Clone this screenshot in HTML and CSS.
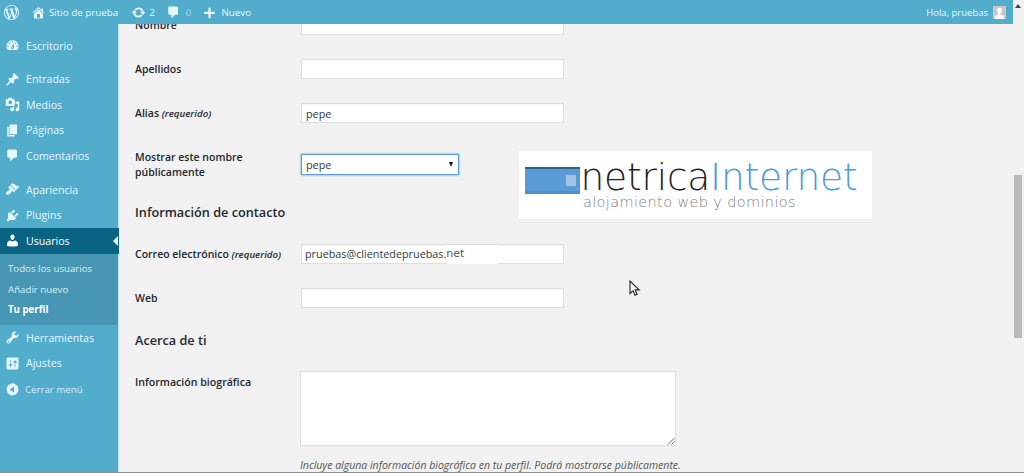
FILE: index.html
```html
<!DOCTYPE html>
<html lang="es">
<head>
<meta charset="utf-8">
<title>Tu perfil</title>
<link rel="stylesheet" href="styles.css">
</head>
<body>
<div class="window">
  <div class="app">
    <header class="bar">
      <svg class="bar-icon logo-w" viewBox="0 0 20 20"><path d="M20 10c0-5.51-4.49-10-10-10C4.48 0 0 4.49 0 10c0 5.52 4.48 10 10 10 5.51 0 10-4.48 10-10zM7.78 15.37L4.37 6.22c.55-.02 1.17-.08 1.17-.08.5-.06.44-1.13-.06-1.11 0 0-1.45.11-2.37.11-.18 0-.37 0-.58-.01C4.12 2.69 6.87 1.11 10 1.11c2.33 0 4.45.87 6.05 2.34-.68-.11-1.65.39-1.65 1.58 0 .74.45 1.36.9 2.1.35.61.55 1.36.55 2.46 0 1.49-1.4 5-1.4 5l-3.03-8.37c.54-.02.82-.17.82-.17.5-.05.44-1.25-.06-1.22 0 0-1.44.12-2.38.12-.87 0-2.33-.12-2.33-.12-.5-.03-.56 1.2-.06 1.22l.92.08 1.26 3.41zM17.41 10c.24-.64.74-1.87.43-4.25.7 1.29 1.05 2.71 1.05 4.25 0 3.29-1.73 6.24-4.4 7.78.97-2.59 1.94-5.2 2.92-7.78zM6.1 18.09C3.12 16.65 1.11 13.53 1.11 10c0-1.3.23-2.48.72-3.59C3.25 10.3 4.67 14.2 6.1 18.09zm4.03-6.63l2.58 6.98c-.86.29-1.76.45-2.71.45-.79 0-1.57-.11-2.29-.33.81-2.38 1.62-4.74 2.42-7.1z"/></svg>
      <span class="bar-item site">
        <svg class="bar-icon" viewBox="0 0 20 20"><path d="M16 8.5l1.53 1.53-1.06 1.06L10 4.62l-6.47 6.47-1.06-1.06L10 2.5l4 4v-2h2v4zm-6-2.46l6 5.99V18H4v-5.97zM12 17v-5H8v5h4z"/></svg>
        Sitio de prueba
      </span>
      <span class="bar-item updates">
        <svg class="bar-icon" viewBox="0 0 20 20"><path d="M10.2 3.28c3.53 0 6.43 2.61 6.92 6h2.08l-3.5 4-3.5-4h2.32c-.45-1.97-2.21-3.45-4.32-3.45-1.45 0-2.73.71-3.54 1.78L4.95 5.66C6.23 4.2 8.11 3.28 10.2 3.28zm-.4 13.44c-3.52 0-6.43-2.61-6.92-6H.8l3.5-4c1.17 1.33 2.33 2.67 3.5 4H5.48c.45 1.97 2.21 3.45 4.32 3.45 1.45 0 2.73-.71 3.54-1.78l1.71 1.95c-1.28 1.46-3.15 2.38-5.25 2.38z"/></svg>
        2
      </span>
      <span class="bar-item comments">
        <svg class="bar-icon" viewBox="0 0 20 20"><path d="M5 2h9c1.1 0 2 .9 2 2v7c0 1.1-.9 2-2 2h-2l-5 5v-5H5c-1.1 0-2-.9-2-2V4c0-1.1.9-2 2-2z"/></svg>
        <span class="count-zero">0</span>
      </span>
      <span class="bar-item new">
        <svg class="bar-icon" viewBox="0 0 20 20"><path d="M17 9v3h-5.5v5.500h-3V12H3V9h5.500V3.500h3V9z"/></svg>
        Nuevo
      </span>
      <span class="bar-item account">
        Hola, pruebas
        <span class="avatar"><svg viewBox="0 0 14 14"><rect width="14" height="14" fill="#c9c9c9"/><path fill="#fff" d="M7 2c1.700 0 2.600 1.300 2.400 3-.1 1.400-.8 2.700-1.300 3.200v1l3.400 1.500V14h-9v-3.300l3.400-1.500v-1C5.400 7.700 4.700 6.400 4.600 5 4.400 3.300 5.300 2 7 2z"/></svg></span>
      </span>
    </header>
    <div class="body">
      <nav class="menu">
        <a class="item group-end"><svg viewBox="0 0 20 20"><path d="M3.76 16h12.48c1.100-1.370 1.760-3.110 1.760-5 0-4.420-3.580-8-8-8s-8 3.580-8 8c0 1.890.66 3.630 1.760 5zM10 4c.55 0 1 .45 1 1s-.45 1-1 1-1-.45-1-1 .45-1 1-1zM6 6c.55 0 1 .45 1 1s-.45 1-1 1-1-.45-1-1 .45-1 1-1zm8 0c.55 0 1 .45 1 1s-.45 1-1 1-1-.45-1-1 .45-1 1-1zm-5.370 5.550L12 7v6c0 1.100-.9 2-2 2s-2-.9-2-2c0-.57.24-1.080.63-1.450zM4 10c.55 0 1 .45 1 1s-.45 1-1 1-1-.45-1-1 .45-1 1-1zm12 0c.55 0 1 .45 1 1s-.45 1-1 1-1-.45-1-1 .45-1 1-1zm-5 3c0-.55-.45-1-1-1s-1 .45-1 1 .45 1 1 1 1-.45 1-1z"/></svg>Escritorio</a>
        <a class="item"><svg viewBox="0 0 20 20"><path d="M10.440 3.020l1.820-1.820 6.360 6.350-1.830 1.820c-1.050-.68-2.480-.57-3.410.36l-.75.75c-.92.93-1.040 2.350-.35 3.410l-1.830 1.820-2.410-2.410-2.800 2.790c-.42.42-3.380 2.710-3.800 2.290s1.860-3.390 2.280-3.810l2.790-2.790L4.100 9.360l1.830-1.820c1.050.69 2.480.57 3.400-.36l.75-.75c.93-.92 1.050-2.350.36-3.410z"/></svg>Entradas</a>
        <a class="item"><svg viewBox="0 0 20 20"><path d="M13 11V4c0-.55-.45-1-1-1h-1.670L9 1H5L3.670 3H2c-.55 0-1 .45-1 1v7c0 .55.45 1 1 1h10c.55 0 1-.45 1-1zM7 4.500c1.380 0 2.500 1.120 2.500 2.500S8.380 9.500 7 9.500 4.500 8.380 4.500 7 5.620 4.500 7 4.500zM14 6h5v10.500c0 1.380-1.120 2.500-2.500 2.500S14 17.880 14 16.500s1.120-2.500 2.500-2.500c.17 0 .34.02.5.05V9h-3V6zm-4 8.050V13h2v3.500c0 1.380-1.120 2.500-2.500 2.500S7 17.880 7 16.500 8.120 14 9.500 14c.17 0 .34.02.5.05z"/></svg>Medios</a>
        <a class="item"><svg viewBox="0 0 20 20"><path d="M6 15V2h10v13H6zm-1 1h8v2H3V5h2v11z"/></svg>Páginas</a>
        <a class="item group-end"><svg viewBox="0 0 20 20"><path d="M5 2h9c1.100 0 2 .9 2 2v7c0 1.100-.9 2-2 2h-2l-5 5v-5H5c-1.100 0-2-.9-2-2V4c0-1.100.9-2 2-2z"/></svg>Comentarios</a>
        <a class="item"><svg viewBox="0 0 20 20"><path d="M14.480 11.060L7.410 3.990l1.500-1.500c.5-.56 2.300-.47 3.510.32 1.210.8 1.430 1.280 2.910 2.100 1.180.64 2.450 1.260 4.450.85zm-.71.71L6.700 4.700 4.930 6.470c-.39.39-.39 1.020 0 1.410l1.060 1.060c.39.39.39 1.030 0 1.420-.6.6-1.430 1.110-2.210 1.690-.35.26-.7.53-1.010.84C1.430 13.230.78 15.780 1.700 16.700c.92.92 3.470.28 4.810-1.060.31-.31.58-.66.85-1.010.58-.78 1.090-1.610 1.690-2.210.39-.39 1.020-.39 1.410 0l1.060 1.060c.39.39 1.020.39 1.410 0z"/></svg>Apariencia</a>
        <a class="item"><svg viewBox="0 0 20 20"><path d="M13.110 4.360L9.870 7.600 8 5.730l3.240-3.240c.35-.34 1.050-.2 1.560.32.52.51.66 1.210.31 1.550zm-8 1.770l.91-1.120 9.010 9.010-1.190.84c-.71.71-2.630 1.160-3.820 1.160H6.140L4.900 17.260c-.59.59-1.540.59-2.120 0-.59-.58-.59-1.530 0-2.120l1.240-1.240v-3.880c0-1.130.4-3.190 1.090-3.890zm7.260 3.970l3.240-3.240c.34-.35 1.040-.21 1.550.31.52.51.66 1.210.31 1.550l-3.240 3.250z"/></svg>Plugins</a>
        <a class="item current"><svg viewBox="0 0 20 20"><path d="M10 9.250c-2.270 0-2.730-3.440-2.730-3.440C7 4.020 7.820 2 9.970 2c2.160 0 2.980 2.020 2.710 3.810 0 0-.41 3.440-2.680 3.440zm0 2.570L12.720 10c2.390 0 4.520 2.330 4.520 4.530v2.490s-3.650 1.130-7.240 1.130c-3.650 0-7.240-1.130-7.240-1.130v-2.490c0-2.250 1.940-4.480 4.470-4.480z"/></svg>Usuarios</a>
        <div class="submenu">
          <a>Todos los usuarios</a>
          <a>Añadir nuevo</a>
          <a class="sub-current">Tu perfil</a>
        </div>
        <a class="item"><svg viewBox="0 0 20 20"><path d="M16.680 9.770c-1.340 1.340-3.300 1.670-4.950.99l-5.410 6.520c-.99.99-2.590.99-3.580 0s-.99-2.590 0-3.570l6.520-5.420c-.68-1.650-.35-3.610.99-4.950 1.280-1.280 3.120-1.620 4.720-1.060l-2.890 2.890 2.820 2.820 2.860-2.870c.53 1.580.18 3.390-1.080 4.650zM3.810 16.210c.4.39 1.040.39 1.430 0 .4-.4.4-1.040 0-1.430-.39-.4-1.030-.4-1.430 0-.39.39-.39 1.030 0 1.430z"/></svg>Herramientas</a>
        <a class="item"><svg viewBox="0 0 20 20"><path d="M18 16V4c0-1.100-.9-2-2-2H4c-1.100 0-2 .9-2 2v12c0 1.100.9 2 2 2h12c1.100 0 2-.9 2-2zM8 11h1c.55 0 1 .45 1 1s-.45 1-1 1H8v1.500c0 .28-.22.5-.5.5s-.5-.22-.5-.5V13H6c-.55 0-1-.45-1-1s.45-1 1-1h1V5.500c0-.28.22-.5.5-.5s.5.22.5.5V11zm5-2h-1c-.55 0-1-.45-1-1s.45-1 1-1h1V5.500c0-.28.22-.5.5-.5s.5.22.5.5V7h1c.55 0 1 .45 1 1s-.45 1-1 1h-1v5.500c0 .28-.22.5-.5.5s-.5-.22-.5-.5V9z"/></svg>Ajustes</a>
        <a class="item collapse"><svg viewBox="0 0 20 20"><path d="M10 2.160c4.330 0 7.840 3.510 7.840 7.840s-3.510 7.840-7.840 7.840S2.160 14.330 2.160 10 5.710 2.160 10 2.160zm2 11.720V6.120L6.180 9.970z"/></svg>Cerrar menú</a>
      </nav>
      <main class="main">
        <form class="form">
          <div class="row">
            <label class="label">Nombre</label>
            <input class="field" type="text">
          </div>
          <div class="row">
            <label class="label">Apellidos</label>
            <input class="field" type="text">
          </div>
          <div class="row">
            <label class="label">Alias <em>(requerido)</em></label>
            <input class="field" type="text" value="pepe">
          </div>
          <div class="row row-tall">
            <label class="label label-top">Mostrar este nombre públicamente</label>
            <span class="select">pepe<i class="select-arrow"></i></span>
          </div>
          <h2 class="heading heading-contact">Información de contacto</h2>
          <div class="row">
            <label class="label">Correo electrónico <em>(requerido)</em></label>
            <div class="field email">pruebas@clientedepruebas.<span class="email-end">net</span></div>
          </div>
          <div class="row">
            <label class="label">Web</label>
            <input class="field" type="text">
          </div>
          <h2 class="heading heading-about">Acerca de ti</h2>
          <div class="row row-bio">
            <label class="label">Información biográfica</label>
            <div class="bio-col">
              <div class="bio">
                <svg class="grip" viewBox="0 0 8 8"><path d="M7.500 1L1 7.500M7.500 4.500L4.500 7.500" stroke="#666" fill="none"/></svg>
              </div>
              <p class="hint">Incluye alguna información biográfica en tu perfil. Podrá mostrarse públicamente.</p>
            </div>
          </div>
        </form>
        <div class="brand">
          <div class="brand-mark"><span></span></div>
          <div class="brand-text">
            <div class="brand-name">netrica<span>Internet</span></div>
            <div class="brand-tag">alojamiento web y dominios</div>
          </div>
        </div>
        <svg class="cursor" viewBox="0 0 12 17"><path d="M1 1v12.500l3-2.700 2 4.400 2.200-1-2-4.300h4z" fill="#f4f4f4" stroke="#222" stroke-width="1.100"/></svg>
      </main>
    </div>
  </div>
  <aside class="scrollbar">
    <i class="scroll-up"></i>
    <div class="thumb"></div>
  </aside>
</div>
</body>
</html>
```
FILE: styles.css
```css
* { box-sizing: border-box; }
html, body { margin: 0; height: 100%; overflow: hidden; }
body { background: #f1f1f1; font-family: "Open Sans", sans-serif; color: #444; font-size: 11px; }
.window { display: flex; height: 473px; border-bottom: 1px solid #909090; }
.app { flex: 1; min-width: 0; display: flex; flex-direction: column; }
.bar { height: 24px; flex: none; background: #52accc; color: #e5f8ff; display: flex; align-items: center; padding-left: 4px; font-size: 9.800px; }
.bar-icon { width: 15px; height: 15px; fill: #e5f8ff; flex: none; }
.bar-item { display: flex; align-items: center; gap: 4px; white-space: nowrap; }
.logo-w { margin-right: 12px; }
.site { margin-right: 13px; gap: 3px; }
.updates { margin-right: 11px; gap: 3px; }
.comments { margin-right: 11px; gap: 5px; }
.count-zero { color: #a5d5e6; }
.new { gap: 4px; }
.account { margin-left: auto; gap: 5px; padding-right: 7px; font-size: 9.500px; }
.avatar { width: 13px; height: 13px; display: block; }
.avatar svg { display: block; width: 13px; height: 13px; }

.body { flex: 1; display: flex; min-height: 0; }
.menu { width: 119px; flex: none; background: #52accc; border-right: 1px solid #c4e3ee; padding-top: 8.800px; display: flex; flex-direction: column; }
.item { height: 25.600px; flex: none; display: flex; align-items: center; gap: 6px; padding-left: 5px; font-size: 10.600px; color: #e5f8ff; position: relative; }
.item svg { width: 15px; height: 15px; fill: #e5f8ff; flex: none; }
.group-end { margin-bottom: 8px; }
.current { background: #096484; color: #fff; margin-right: -1px; }
.current svg { fill: #fff; }
.current::after { content: ""; position: absolute; right: 1px; top: 50%; margin-top: -5px; border: 5px solid transparent; border-right-color: #f1f1f1; border-left-width: 0; }
.submenu { background: #4796b3; padding: 5px 0 5px; display: flex; flex-direction: column; }
.submenu a { height: 20.500px; display: flex; align-items: center; padding-left: 8px; font-size: 9.700px; color: #d8eef6; }
.submenu .sub-current { color: #fff; font-weight: 700; }
.collapse { font-size: 9.700px; gap: 5px; color: #d8eef6; }

.main { flex: 1; min-width: 0; position: relative; overflow: hidden; padding-left: 16px; }
.form { margin-top: -9px; }
.row { display: flex; align-items: center; height: 20px; margin-bottom: 24px; }
.row-tall { align-items: flex-start; height: 35px; padding-top: 3px; margin-bottom: 21px; }
.row-bio { align-items: flex-start; height: auto; margin: 0; }
.label { width: 166px; flex: none; font-size: 10.500px; font-weight: 600; line-height: 15px; color: #23282d; }
.label em { font-size: 9.700px; font-style: italic; }
.label-top { width: 150px; margin-right: 16px; }
.row-bio .label { padding-top: 4px; width: 165px; font-size: 10.600px; }
.field { width: 263px; height: 20px; padding: 0 4px; border: 1px solid #ddd; background: #fff; font: 10.800px/18px "Open Sans", sans-serif; color: #32373c; box-shadow: inset 0 1px 2px rgba(0,0,0,.04); outline: none; }
.email { display: flex; align-items: center; padding: 0 3px; position: relative; }
.email-end { align-self: stretch; width: 52px; height: 19px; font-family: "DejaVu Sans", sans-serif; font-size: 11px; line-height: 18px; color: #555; background: #fff; }
.select { width: 158px; height: 21px; margin-top: 4px; padding: 0 4px; border: 1px solid #5b9dd9; background: #fff; font-size: 10.800px; line-height: 19px; color: #32373c; box-shadow: 0 0 2px rgba(30,140,190,.8); display: flex; align-items: center; justify-content: space-between; }
.select-arrow { border: 2.500px solid transparent; border-top: 5px solid #111; border-bottom-width: 0; margin-right: 1px; }
.heading { margin: 0; font-size: 12.700px; font-weight: 600; line-height: 18px; color: #23282d; }
.heading-contact { margin-bottom: 23px; }
.heading-about { margin-top: -1px; margin-bottom: 22px; }
.bio-col { display: block; }
.bio { width: 376px; height: 75px; background: #fff; border: 1px solid #ddd; position: relative; }
.grip { position: absolute; right: 0; bottom: 0; width: 8px; height: 8px; }
.hint { margin: 12px 0 0; font-size: 10.500px; font-style: italic; line-height: 15px; color: #555; white-space: nowrap; }

.brand { position: absolute; left: 400px; top: 127px; width: 353px; height: 68px; background: #fff; display: flex; gap: 2px; padding: 8.500px 0 0 6px; }
.brand-mark { width: 55px; height: 27px; margin-top: 7.500px; background: #5b9bd5; border-top: 2px solid #35607f; border-bottom: 3px solid #4a90cf; position: relative; flex: none; }
.brand-mark span { position: absolute; right: 4px; top: 6px; width: 10px; height: 11px; background: #9fc3e2; }
.brand-text { font-family: "DejaVu Sans", sans-serif; }
.brand-name { font-size: 37.500px; font-weight: 200; line-height: 35.500px; margin-left: -1.500px; color: #222; white-space: nowrap; letter-spacing: -0.200px; }
.brand-name span { color: #4f9bd9; }
.brand-tag { font-size: 14.500px; font-weight: 200; line-height: 15px; margin-left: 1px; color: #808080; letter-spacing: .35px; white-space: nowrap; }
.cursor { position: absolute; left: 510px; top: 256px; width: 12px; height: 17px; }

.scrollbar { width: 11px; flex: none; position: relative; padding: 175px 1px 0 1px; }
.thumb { height: 163px; width: 8px; background: #b9b9b9; }
.scroll-up { position: absolute; left: 2px; top: 4px; border: 3px solid transparent; border-bottom: 4px solid #444; border-top-width: 0; }
```
